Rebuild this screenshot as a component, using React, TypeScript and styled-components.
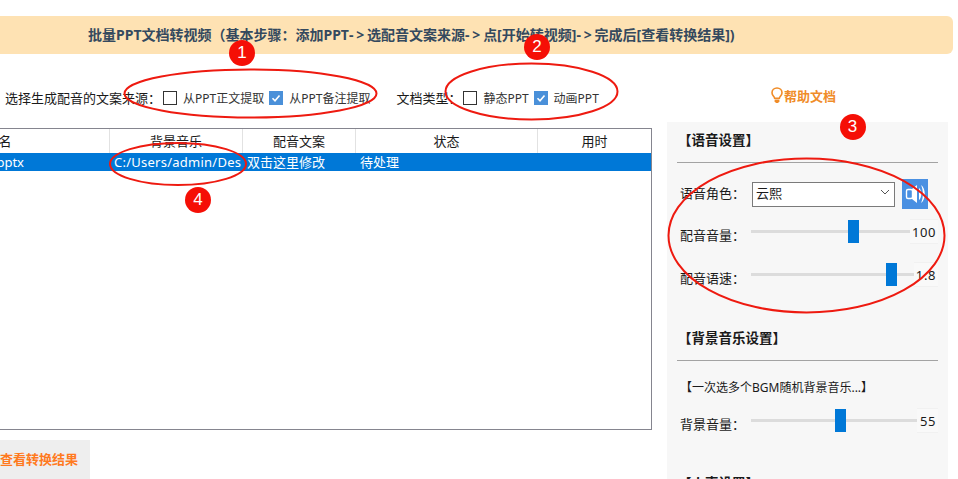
import styled, { createGlobalStyle } from 'styled-components';

const GlobalStyle = createGlobalStyle`
  html, body {
    margin: 0;
    background: #fff;
  }
  body {
    font-family: 'Noto Sans', 'Noto Sans CJK SC', sans-serif;
    font-size: 13px;
    color: #1a1a1a;
  }
`;

const columns = [
  { title: '文件名', value: '示例.pptx' },
  { title: '背景音乐', value: 'C:/Users/admin/Des' },
  { title: '配音文案', value: '双击这里修改' },
  { title: '状态', value: '待处理' },
  { title: '用时', value: '' },
];

const marks = [
  { n: 1, cx: 250.5, cy: 93.5, rx: 126, ry: 24, bx: 242, by: 52.5 },
  { n: 2, cx: 531.5, cy: 91.5, rx: 86, ry: 28, bx: 537, by: 47 },
  { n: 3, cx: 806.5, cy: 235.5, rx: 138, ry: 77, bx: 852.5, by: 127 },
  { n: 4, cx: 178, cy: 164, rx: 68, ry: 21, bx: 198, by: 200 },
];

function Check(props: { label: string; checked?: boolean }) {
  return (
    <CheckLabel>
      <CheckBox checked={props.checked}>
        {props.checked && (
          <svg width="10" height="10" viewBox="0 0 10 10">
            <path d="M1.5 5.2 L4 7.8 L8.5 2.4" fill="none" stroke="#fff" strokeWidth="1.6" />
          </svg>
        )}
      </CheckBox>
      {props.label}
    </CheckLabel>
  );
}

function Slider(props: { label: string; value: string; percent: number; fieldWidth: number; gap?: number }) {
  return (
    <SliderRow gap={props.gap}>
      <SliderLabel>{props.label}</SliderLabel>
      <Track>
        <Thumb style={{ left: `${props.percent}%` }} />
      </Track>
      <ValueField width={props.fieldWidth}>{props.value}</ValueField>
    </SliderRow>
  );
}

export default function App() {
  return (
    <>
      <GlobalStyle />
      <Page>
        <Banner>
          批量PPT文档转视频（基本步骤：添加PPT<Arrow>-&gt;</Arrow>选配音文案来源<Arrow>-&gt;</Arrow>点[开始转视频]
          <Arrow>-&gt;</Arrow>完成后[查看转换结果])
        </Banner>
        <Content>
          <LeftColumn>
            <Toolbar>
              <SourceLabel>选择生成配音的文案来源：</SourceLabel>
              <Check label="从PPT正文提取" />
              <Check label="从PPT备注提取" checked />
              <TypeLabel>文档类型：</TypeLabel>
              <Check label="静态PPT" />
              <Check label="动画PPT" checked />
            </Toolbar>
            <Table>
              <TableRow>
                {columns.map((c) => (
                  <HeadCell key={c.title}>{c.title}</HeadCell>
                ))}
              </TableRow>
              <TableRow selected>
                {columns.map((c, index) => (
                  <BodyCell key={c.title} first={index === 0} spaced={index === 1}>
                    {c.value}
                  </BodyCell>
                ))}
              </TableRow>
            </Table>
            <ResultButton>查看转换结果</ResultButton>
          </LeftColumn>
          <RightColumn>
            <HelpLink>
              <svg width="12" height="17" viewBox="0 0 12 17">
                <path
                  d="M3.6 11.2 C3.4 9.6 1 8.6 1 5.8 C1 3 3.2 1 6 1 C8.8 1 11 3 11 5.8 C11 8.6 8.6 9.6 8.4 11.2 Z"
                  fill="none"
                  stroke="#f08c28"
                  strokeWidth="1.6"
                />
                <path d="M3.6 12.4 H8.4 V14.6 L7 16 H5 L3.6 14.6 Z" fill="#f08c28" />
              </svg>
              帮助文档
            </HelpLink>
            <Panel>
              <PanelTitle>【语音设置】</PanelTitle>
              <Divider />
              <SelectRow>
                <SelectLabel>语音角色：</SelectLabel>
                <FakeSelect>
                  云熙
                  <svg width="10" height="6" viewBox="0 0 10 6">
                    <path d="M1 1 L5 5 L9 1" fill="none" stroke="#555" strokeWidth="1" />
                  </svg>
                </FakeSelect>
                <SoundButton>
                  <svg width="26" height="30" viewBox="0 0 26 30">
                    <rect x="4.5" y="10.5" width="6" height="9" rx="1.5" fill="none" stroke="#fff" strokeWidth="1.4" />
                    <path d="M10 10 L15 6 V24 L10 20 Z" fill="#fff" />
                    <path d="M17 9 C20 11 20 19 17 21 Z" fill="#fff" />
                    <path d="M19 6 C24 9 24 21 19 24 C21.5 19 21.5 11 19 6 Z" fill="#fff" />
                  </svg>
                </SoundButton>
              </SelectRow>
              <Slider label="配音音量：" value="100" percent={61} fieldWidth={28} gap={12} />
              <Slider label="配音语速：" value="1.8" percent={83} fieldWidth={24} gap={18} />
              <PanelTitle second>【背景音乐设置】</PanelTitle>
              <Divider />
              <BgmPicker>【一次选多个BGM随机背景音乐...】</BgmPicker>
              <Slider label="背景音量：" value="55" percent={50.5} fieldWidth={21} gap={12} />
              <PanelTitle third>【人声设置】</PanelTitle>
            </Panel>
          </RightColumn>
        </Content>
        <Overlay width="958" height="479" viewBox="0 0 958 479">
          {marks.map((m) => (
            <ellipse key={m.n} cx={m.cx} cy={m.cy} rx={m.rx} ry={m.ry} fill="none" stroke="#ee1a10" strokeWidth="2" />
          ))}
        </Overlay>
        {marks.map((m) => (
          <Badge key={m.n} style={{ left: m.bx - 13, top: m.by - 13 }}>
            {m.n}
          </Badge>
        ))}
      </Page>
    </>
  );
}

const Page = styled.div`
  position: relative;
  width: 958px;
  height: 479px;
  padding-top: 16px;
  box-sizing: border-box;
  overflow: hidden;
`;

const Banner = styled.div`
  width: 953px;
  height: 38px;
  box-sizing: border-box;
  padding-left: 88px;
  line-height: 38px;
  background: #fee2b3;
  border-radius: 0 6px 6px 0;
  font-size: 14px;
  font-weight: 700;
  color: #34495e;
  white-space: nowrap;
`;

const Arrow = styled.span`
  letter-spacing: 2.8px;
`;

const Content = styled.div`
  display: flex;
  gap: 15px;
`;

const LeftColumn = styled.div`
  width: 652px;
`;

const Toolbar = styled.div`
  display: flex;
  align-items: center;
  height: 74px;
  padding: 13px 0 0 5px;
  box-sizing: border-box;
  font-size: 12px;
  white-space: nowrap;
`;

const SourceLabel = styled.span`
  width: 158px;
  font-size: 13px;
`;

const TypeLabel = styled.span`
  width: 67px;
  margin-left: 21px;
  font-size: 13px;
`;

const CheckLabel = styled.label`
  display: flex;
  align-items: center;
  gap: 6px;
  margin-right: 5px;
  color: #333;
`;

const CheckBox = styled.span<{ checked?: boolean }>`
  display: flex;
  align-items: center;
  justify-content: center;
  width: 14px;
  height: 14px;
  box-sizing: border-box;
  border: 1px solid ${(props) => (props.checked ? '#4a90d9' : '#333')};
  background: ${(props) => (props.checked ? '#4a90d9' : '#fff')};
`;

const Table = styled.div`
  width: 777px;
  height: 302px;
  margin-left: -125px;
  box-sizing: border-box;
  border: 1px solid #85858f;
  border-left: 0;
`;

const TableRow = styled.div<{ selected?: boolean }>`
  display: grid;
  grid-template-columns: 235px 133px 113px 182px 113px;
  height: ${(props) => (props.selected ? '18px' : '24px')};
  background: ${(props) => (props.selected ? '#0078d7' : '#fff')};
  color: ${(props) => (props.selected ? '#fff' : '#1a1a1a')};
`;

const HeadCell = styled.div`
  text-align: center;
  line-height: 24px;
  border-right: 1px solid #e2e2e2;
  &:last-child {
    border-right: 0;
  }
`;

const BodyCell = styled.div<{ first?: boolean; spaced?: boolean }>`
  line-height: 18px;
  white-space: nowrap;
  padding: ${(props) => (props.first ? '0 86px 0 0' : '0 0 0 4px')};
  text-align: ${(props) => (props.first ? 'right' : 'left')};
  letter-spacing: ${(props) => (props.spaced ? '0.25px' : '0')};
`;

const ResultButton = styled.div`
  width: 90px;
  height: 39px;
  margin-top: 10px;
  line-height: 38px;
  background: #eeeeee;
  color: #ff7a1e;
  font-weight: 700;
  white-space: nowrap;
`;

const RightColumn = styled.div`
  width: 281px;
`;

const HelpLink = styled.div`
  display: flex;
  align-items: center;
  justify-content: center;
  gap: 1px;
  height: 68px;
  padding: 14px 8px 0 0;
  box-sizing: border-box;
  color: #f08c28;
  font-weight: 700;
`;

const Panel = styled.div`
  height: 370px;
  padding: 9px 10px 0;
  box-sizing: border-box;
  background: #f7f7f7;
`;

const PanelTitle = styled.div<{ second?: boolean; third?: boolean }>`
  height: 20px;
  line-height: 18px;
  margin-top: ${(props) => (props.second ? '40px' : props.third ? '39px' : '0')};
  padding-left: 1px;
  font-weight: 700;
  font-size: 13.5px;
  white-space: nowrap;
`;

const Divider = styled.div`
  height: 1px;
  margin-top: 11px;
  background: #a3a3a3;
`;

const SelectRow = styled.div`
  display: flex;
  align-items: center;
  margin-top: 16px;
`;

const RowLabel = styled.span`
  width: 75px;
  padding-left: 3px;
  box-sizing: border-box;
  flex: none;
  font-size: 13px;
  white-space: nowrap;
`;

const SelectLabel = styled(RowLabel)`
  padding-bottom: 3px;
`;

const SliderLabel = styled(RowLabel)`
  padding-top: 2px;
`;

const FakeSelect = styled.div`
  display: flex;
  align-items: center;
  justify-content: space-between;
  width: 143px;
  height: 25px;
  padding: 0 4px 4px 3px;
  box-sizing: border-box;
  border: 1px solid #7a7a7a;
  background: #fff;
`;

const SoundButton = styled.div`
  display: flex;
  width: 26px;
  height: 30px;
  margin-left: 7px;
  background: #4a90e2;
`;

const SliderRow = styled.div<{ gap?: number }>`
  display: flex;
  align-items: center;
  height: 25px;
  margin-top: ${(props) => props.gap ?? 0}px;
`;

const Track = styled.div`
  position: relative;
  flex: 1;
  height: 3px;
  margin: -4px 0 0 -1px;
  background: #dcdcdc;
`;

const Thumb = styled.div`
  position: absolute;
  top: -10px;
  width: 11px;
  height: 23px;
  background: #0078d7;
`;

const ValueField = styled.div<{ width: number }>`
  width: ${(props) => props.width}px;
  height: 25px;
  margin-top: -4px;
  box-sizing: border-box;
  padding-right: 2px;
  line-height: 24px;
  text-align: right;
  letter-spacing: 0.6px;
  border-top: 1px solid #f1f1f1;
  border-bottom: 1px solid #f1f1f1;
  background: #f9f9f9;
`;

const BgmPicker = styled.div`
  margin-top: 17px;
  height: 20px;
  padding-left: 3px;
  line-height: 20px;
  font-size: 12px;
  white-space: nowrap;
`;

const Overlay = styled.svg`
  position: absolute;
  left: 0;
  top: 0;
  pointer-events: none;
`;

const Badge = styled.div`
  position: absolute;
  width: 26px;
  height: 26px;
  border-radius: 50%;
  background: #f50f06;
  color: #fff;
  font-size: 17px;
  line-height: 26px;
  text-align: center;
  font-family: 'Liberation Sans', sans-serif;
`;
